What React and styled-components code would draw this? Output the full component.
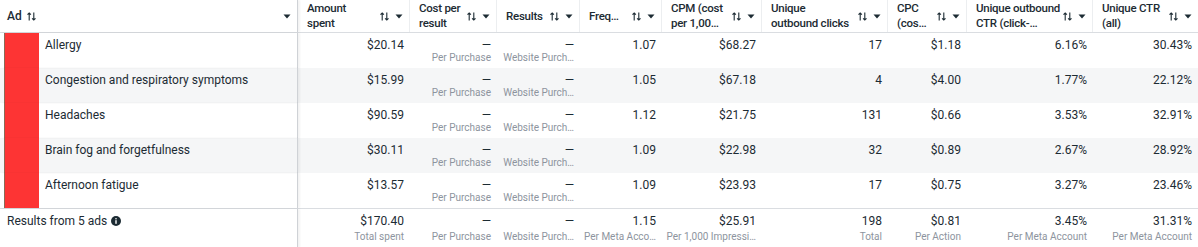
import styled, { createGlobalStyle } from 'styled-components';

const COLS = '298px 112px 87px 83px 82px 100px 126px 79px 126px 105px';

const GlobalStyle = createGlobalStyle`
  html, body {
    margin: 0;
    padding: 0;
    background: #ffffff;
  }
  body {
    font-family: Roboto, "Liberation Sans", Arial, sans-serif;
    color: #1c2b33;
    overflow: hidden;
  }
`;

const Table = styled.div`
  width: 1198px;
  height: 247px;
  overflow: hidden;
  background: #ffffff;
`;

const Row = styled.div`
  display: grid;
  grid-template-columns: ${COLS};
  height: ${p => p.$h}px;
  background: ${p => (p.$shade ? '#f5f6f7' : '#ffffff')};
  border-top: ${p => (p.$top ? '1px solid #dadde1' : 'none')};
  border-bottom: ${p => (p.$bottom ? '1px solid #dadde1' : 'none')};
`;

const HeadCell = styled.div`
  display: flex;
  align-items: center;
  gap: 3px;
  padding: 0 6px 0 ${p => p.$pl || 9}px;
  border-right: ${p => (p.$sticky ? '1px solid #cfd2d6' : p.$last ? 'none' : '1px solid #eceef0')};
  box-shadow: ${p => (p.$sticky ? '2px 0 2px rgba(0,0,0,0.05)' : 'none')};
  min-width: 0;
`;

const HeadLabel = styled.div`
  flex: 1;
  min-width: 0;
  font-size: 11.5px;
  font-weight: 500;
  line-height: 15px;
  letter-spacing: -0.25px;
  white-space: nowrap;
`;

const AdLabel = styled.span`
  font-size: 12px;
  font-weight: 500;
  line-height: 15px;
  margin-right: 2px;
`;

const Spacer = styled.div`
  flex: 1;
`;

const Icons = styled.div`
  display: flex;
  align-items: center;
  flex: none;
  gap: 6px;
`;

const AdCell = styled.div`
  display: flex;
  gap: 6px;
  padding-left: 4px;
  border-right: 1px solid #cfd2d6;
  box-shadow: 2px 0 2px rgba(0,0,0,0.05);
  min-width: 0;
`;

const Thumb = styled.div`
  width: 35px;
  flex: none;
  background: #fd3434;
  box-shadow: inset 1px 0 0 #8a6a58;
`;

const AdName = styled.div`
  padding-top: 5px;
  font-size: 12px;
  line-height: 14px;
  white-space: nowrap;
`;

const FootLabel = styled.div`
  display: flex;
  align-items: flex-start;
  gap: 4px;
  padding: 5px 0 0 7px;
  font-size: 12px;
  line-height: 14px;
  border-right: 1px solid #cfd2d6;
  box-shadow: 2px 0 2px rgba(0,0,0,0.05);
  svg {
    margin-top: 2px;
  }
`;

const Cell = styled.div`
  display: flex;
  flex-direction: column;
  align-items: flex-end;
  padding: 5px 6px 0 4px;
  min-width: 0;
  text-align: right;
`;

const Value = styled.div`
  font-size: 12px;
  line-height: 14px;
  white-space: nowrap;
`;

const Sub = styled.div`
  margin-top: ${p => p.$mt || 0}px;
  font-size: 10px;
  line-height: 13px;
  color: #8d949e;
  white-space: nowrap;
`;

const SortIcon = () => (
  <svg width="9" height="9" viewBox="0 0 9 9" fill="none" stroke="#1c2b33" strokeWidth="1.1">
    <path d="M2.2 8.5V1M0.5 2.7L2.2 1L3.9 2.7" />
    <path d="M6.8 0.5V8M5.1 6.3L6.8 8L8.5 6.3" />
  </svg>
);

const Caret = () => (
  <svg width="8" height="5" viewBox="0 0 8 5">
    <path d="M0.5 0.5H7.5L4 4.5Z" fill="#1c2b33" />
  </svg>
);

const InfoIcon = () => (
  <svg width="10" height="10" viewBox="0 0 10 10">
    <circle cx="5" cy="5" r="5" fill="#1c2b33" />
    <rect x="4.3" y="4.2" width="1.4" height="3.6" fill="#ffffff" />
    <circle cx="5" cy="2.8" r="0.8" fill="#ffffff" />
  </svg>
);

const headers = [
  ['Amount', 'spent'],
  ['Cost per', 'result'],
  ['Results'],
  ['Freq…'],
  ['CPM (cost', 'per 1,00…'],
  ['Unique', 'outbound clicks'],
  ['CPC', '(cos…'],
  ['Unique outbound', 'CTR (click-…'],
  ['Unique CTR', '(all)'],
];

const ads = [
  ['Allergy', '$20.14', '1.07', '$68.27', '17', '$1.18', '6.16%', '30.43%'],
  ['Congestion and respiratory symptoms', '$15.99', '1.05', '$67.18', '4', '$4.00', '1.77%', '22.12%'],
  ['Headaches', '$90.59', '1.12', '$21.75', '131', '$0.66', '3.53%', '32.91%'],
  ['Brain fog and forgetfulness', '$30.11', '1.09', '$22.98', '32', '$0.89', '2.67%', '28.92%'],
  ['Afternoon fatigue', '$13.57', '1.09', '$23.93', '17', '$0.75', '3.27%', '23.46%'],
];

const totals = [
  ['$170.40', 'Total spent'],
  ['—', 'Per Purchase'],
  ['—', 'Website Purch…'],
  ['1.15', 'Per Meta Acco…'],
  ['$25.91', 'Per 1,000 Impressi…'],
  ['198', 'Total'],
  ['$0.81', 'Per Action'],
  ['3.45%', 'Per Meta Account'],
  ['31.31%', 'Per Meta Account'],
];

export default function App() {
  return (
    <Table>
      <GlobalStyle />
      <Row $h={32} $bottom>
        <HeadCell $sticky $pl={7}>
          <AdLabel>Ad</AdLabel>
          <SortIcon />
          <Spacer />
          <Caret />
        </HeadCell>
        {headers.map((lines, i) => (
          <HeadCell key={i} $last={i === headers.length - 1}>
            <HeadLabel>
              {lines.map(l => (
                <div key={l}>{l}</div>
              ))}
            </HeadLabel>
            <Icons>
              <SortIcon />
              <Caret />
            </Icons>
          </HeadCell>
        ))}
      </Row>

      {ads.map(([name, spent, freq, cpm, clicks, cpc, octr, ctr], i) => (
        <Row key={name} $h={35} $shade={i % 2 === 1}>
          <AdCell>
            <Thumb />
            <AdName>{name}</AdName>
          </AdCell>
          <Cell><Value>{spent}</Value></Cell>
          <Cell>
            <Value>—</Value>
            <Sub $mt={-1}>Per Purchase</Sub>
          </Cell>
          <Cell>
            <Value>—</Value>
            <Sub $mt={-1}>Website Purch…</Sub>
          </Cell>
          <Cell><Value>{freq}</Value></Cell>
          <Cell><Value>{cpm}</Value></Cell>
          <Cell><Value>{clicks}</Value></Cell>
          <Cell><Value>{cpc}</Value></Cell>
          <Cell><Value>{octr}</Value></Cell>
          <Cell><Value>{ctr}</Value></Cell>
        </Row>
      ))}

      <Row $h={39} $top>
        <FootLabel>
          Results from 5 ads
          <InfoIcon />
        </FootLabel>
        {totals.map(([v, s], i) => (
          <Cell key={i}>
            <Value>{v}</Value>
            <Sub $mt={2}>{s}</Sub>
          </Cell>
        ))}
      </Row>
    </Table>
  );
}
